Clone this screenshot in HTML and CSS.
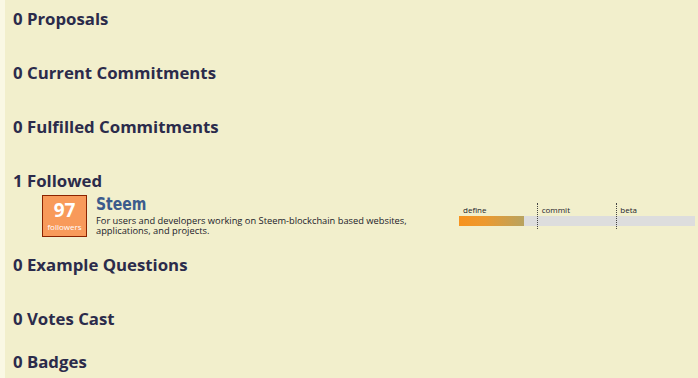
FILE: index.html
```html
<!DOCTYPE html>
<html>
<head>
<meta charset="utf-8">
<link rel="stylesheet" href="styles.css">
</head>
<body>
<div class="page">
  <section class="sec"><h3 class="head">0 Proposals</h3></section>
  <section class="sec"><h3 class="head">0 Current Commitments</h3></section>
  <section class="sec"><h3 class="head">0 Fulfilled Commitments</h3></section>
  <section class="sec sec-followed">
    <h3 class="head">1 Followed</h3>
    <div class="item">
      <div class="badge">
        <div class="badge-num">97</div>
        <div class="badge-lbl">followers</div>
      </div>
      <div class="info">
        <div class="title"><span class="title-txt">Steem</span></div>
        <div class="desc">For users and developers working on Steem-blockchain based websites, applications, and projects.</div>
      </div>
      <div class="progress">
        <div class="labels">
          <span class="lbl">define</span>
          <span class="lbl">commit</span>
          <span class="lbl">beta</span>
        </div>
        <div class="bar"><div class="fill" style="width:27.5%"></div></div>
      </div>
    </div>
  </section>
  <section class="sec"><h3 class="head">0 Example Questions</h3></section>
  <section class="sec sec-votes"><h3 class="head">0 Votes Cast</h3></section>
  <section class="sec"><h3 class="head">0 Badges</h3></section>
</div>
</body>
</html>
```
FILE: styles.css
```css
html, body {
  margin: 0;
  padding: 0;
}
body {
  background: #f2efcc;
  font-family: "Open Sans", "DejaVu Sans", sans-serif;
  color: #2b2b4b;
}
.page {
  border-left: 5px solid #faf8e4;
  height: 378px;
  overflow: hidden;
  box-sizing: border-box;
  padding: 9px 0 0 8px;
}
.sec {
  margin-bottom: 34px;
}
.sec-followed {
  margin-bottom: 18px;
}
.sec-votes {
  margin-bottom: 23px;
}
.head {
  margin: 0;
  font-size: 16.8px;
  line-height: 20px;
  font-weight: bold;
  color: #2b2b4b;
}
.item {
  display: flex;
  align-items: flex-start;
  margin-top: 4px;
  margin-left: 29px;
}
.badge {
  width: 43px;
  height: 40px;
  background: #f89a5a;
  border: 1px solid #8b2300;
  color: #fff;
  text-align: center;
  display: flex;
  flex-direction: column;
  align-items: center;
  flex: none;
}
.badge-num {
  font-weight: bold;
  font-size: 19px;
  line-height: 18px;
  margin-top: 5px;
}
.badge-lbl {
  font-size: 8px;
  line-height: 9px;
  margin-top: 3px;
}
.info {
  margin-left: 9px;
  width: 330px;
  flex: none;
}
.title {
  height: 18px;
  line-height: 18px;
}
.title-txt {
  display: inline-block;
  font-family: "DejaVu Sans", sans-serif;
  font-weight: bold;
  font-size: 18px;
  color: #3c5b8c;
  transform: scaleX(0.78);
  transform-origin: left center;
}
.desc {
  font-size: 9.3px;
  line-height: 10px;
  color: #1a1a2a;
  margin-top: 3px;
}
.progress {
  margin-left: auto;
  margin-right: 3px;
  width: 236px;
  flex: none;
  position: relative;
  margin-top: 8px;
}
.labels {
  display: grid;
  grid-template-columns: 1fr 1fr 1fr;
  height: 13px;
}
.lbl {
  font-size: 8px;
  line-height: 12px;
  padding-left: 4px;
  padding-top: 1px;
  color: #1a1a2a;
}
.bar {
  height: 10px;
  background: #dddddd;
}
.fill {
  height: 100%;
  background: linear-gradient(to right, #f7931e 0%, #ec992f 40%, #b8a35f 100%);
}
.progress::before,
.progress::after {
  content: "";
  position: absolute;
  top: 0;
  height: 26px;
  border-left: 1px dotted #444;
}
.progress::before { left: 78px; }
.progress::after { left: 157px; }
```
